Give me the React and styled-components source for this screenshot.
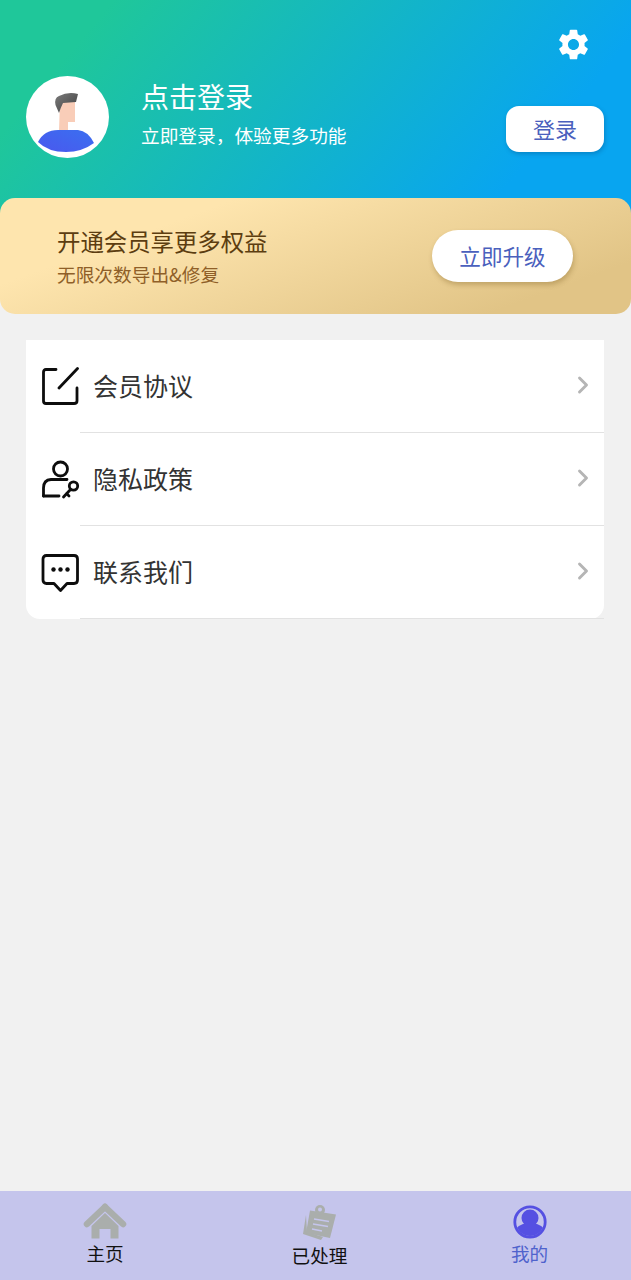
import React from "react";
import styled, { createGlobalStyle } from "styled-components";
import { ChevronRight } from "lucide-react";
import { MdSettings } from "react-icons/md";

const Global = createGlobalStyle`
  html, body { margin: 0; padding: 0; background: #f1f1f1; }
  body { font-family: "Noto Sans CJK SC", "Noto Sans", sans-serif; }
  * { box-sizing: border-box; }
`;

const Page = styled.div`
  width: 631px;
  height: 1280px;
  display: flex;
  flex-direction: column;
  background: #f1f1f1;
  overflow: hidden;
`;

const Header = styled.header`
  height: 213px;
  padding: 27px 27px 0 26px;
  display: flex;
  flex-direction: column;
  background: linear-gradient(130deg, #1fc79a 14%, #08a5f0 82%);
`;

const TopBar = styled.div`
  display: flex;
  justify-content: flex-end;
  align-items: center;
  padding-right: 12px;
  height: 35px;
  color: #fff;
  font-size: 37px;
  line-height: 0;
`;

const Profile = styled.div`
  margin-top: 14px;
  display: flex;
  align-items: flex-start;
`;

const Avatar = styled.div`
  width: 83px;
  height: 82px;
  border-radius: 50%;
  background: #fff;
  overflow: hidden;
  flex: none;
`;

const ProfileText = styled.div`
  margin-left: 32px;
  flex: 1;
  color: #fff;
  display: flex;
  flex-direction: column;
`;

const Name = styled.div`
  font-size: 28px;
  line-height: 41px;
`;

const Hint = styled.div`
  font-size: 18.7px;
  line-height: 28px;
  margin-top: 4px;
`;

const LoginButton = styled.button`
  margin-top: 30px;
  width: 98px;
  height: 46px;
  border: 0;
  padding: 0 0 3px;
  border-radius: 13px;
  background: #fff;
  color: #4a60bd;
  font: inherit;
  font-size: 22px;
  box-shadow: 1px 2px 4px rgba(0, 60, 110, 0.3);
`;

const Banner = styled.section`
  height: 116px;
  margin-top: -15px;
  border-radius: 15px;
  padding: 0 58px 0 57px;
  display: flex;
  align-items: center;
  justify-content: space-between;
  background: linear-gradient(160deg, #fee5ae 25%, #e1c486 85%);
`;

const BannerText = styled.div`
  display: flex;
  flex-direction: column;
`;

const BannerTitle = styled.div`
  font-size: 23.4px;
  line-height: 33px;
  color: #5c3d10;
`;

const BannerSub = styled.div`
  font-size: 18.7px;
  line-height: 28px;
  margin-top: 2px;
  color: #8f5f28;
`;

const UpgradeButton = styled.button`
  width: 141px;
  height: 52px;
  border: 0;
  padding: 0 0 2px;
  border-radius: 26px;
  background: #fff;
  color: #4a60bd;
  font: inherit;
  font-size: 21.6px;
  box-shadow: 1px 3px 5px rgba(110, 80, 20, 0.3);
`;

const Menu = styled.nav`
  margin: 26px 27px 0 26px;
  border-radius: 0 0 14px 14px;
  background: #fff;
  display: flex;
  flex-direction: column;
`;

const Row = styled.div`
  height: 93px;
  display: flex;
  align-items: stretch;
`;

const RowIcon = styled.div`
  width: 54px;
  flex: none;
  display: flex;
  align-items: center;
  padding-left: 15px;
`;

const RowBody = styled.div`
  flex: 1;
  display: flex;
  align-items: center;
  justify-content: space-between;
  padding-right: 7px;
  border-bottom: 1px solid #e2e2e2;
`;

const RowLabel = styled.span`
  font-size: 25px;
  color: #333;
  margin: -2px 0 0 13px;
`;

const Chevron = styled(ChevronRight)`
  color: #b5b5b5;
  margin-top: -2px;
`;

const Spacer = styled.div`
  flex: 1;
`;

const TabBar = styled.footer`
  height: 89px;
  display: grid;
  grid-template-columns: 210px 219px 201px;
  background: #c5c5ec;
`;

const Tab = styled.div`
  display: flex;
  flex-direction: column;
  align-items: center;
  padding-top: ${(p) => p.$top}px;
`;

const TabLabel = styled.span`
  font-size: 18.6px;
  line-height: 26px;
  margin-top: ${(p) => p.$gap}px;
  color: ${(p) => (p.$active ? "#4f62cc" : "#111")};
`;

const AvatarArt = () => (
  <svg width="83" height="82" viewBox="0 0 83 82">
    <defs>
      <linearGradient id="shirt" x1="0" y1="1" x2="1" y2="0">
        <stop offset="0" stopColor="#4a58ee" />
        <stop offset="1" stopColor="#3a6ff0" />
      </linearGradient>
      <linearGradient id="hair" x1="0" y1="0" x2="1" y2="1">
        <stop offset="0" stopColor="#7b7b7b" />
        <stop offset="1" stopColor="#3f3f3f" />
      </linearGradient>
    </defs>
    <path d="M34 24H49V46H42V55H33Z" fill="#f9cdb8" />
    <path d="M33 37L29.500 29Q28 22 33 20Q42 15.500 52 18L50 26L37 27Q35 31 33 37Z" fill="url(#hair)" />
    <path d="M12 66Q18 54 32 54H52Q62 55 68 67Q56 76 40 76Q22 76 12 66Z" fill="url(#shirt)" />
  </svg>
);

const EditIcon = () => (
  <svg width="39" height="39" viewBox="0 0 39 39" fill="none" stroke="#0d0d0d" strokeWidth="2.800" strokeLinecap="round">
    <path d="M15 2.500H5Q2.500 2.500 2.500 5V34Q2.500 36.500 5 36.500H33Q36 36.500 36 34V21" />
    <path d="M36.500 1.500L18 21" />
  </svg>
);

const PersonKeyIcon = () => (
  <svg width="39" height="39" viewBox="0 0 39 39" fill="none" stroke="#0d0d0d" strokeWidth="2.800" strokeLinecap="round">
    <circle cx="19.500" cy="9" r="7" />
    <path d="M2.500 36V28Q2.500 20 10 19.500H26" />
    <path d="M2.500 36H18" />
    <circle cx="32.500" cy="26" r="4.200" />
    <path d="M29.500 29.500L22.500 37M25.500 33.500L28 36" />
  </svg>
);

const ChatIcon = () => (
  <svg width="39" height="39" viewBox="0 0 39 39" fill="none" stroke="#0d0d0d" strokeWidth="2.800" strokeLinejoin="round">
    <path d="M5.500 2.500H33Q36.500 2.500 36.500 6V27Q36.500 30.500 33 30.500H26L19.500 37.500L13 30.500H5.500Q2 30.500 2 27V6Q2 2.500 5.500 2.500Z" />
    <circle cx="12.500" cy="16.500" r="2.200" fill="#0d0d0d" stroke="none" />
    <circle cx="19.500" cy="16.500" r="2.200" fill="#0d0d0d" stroke="none" />
    <circle cx="26.500" cy="16.500" r="2.200" fill="#0d0d0d" stroke="none" />
  </svg>
);

const HomeIcon = () => (
  <svg width="44" height="36" viewBox="0 0 44 36">
    <path d="M22 4L4 21" stroke="#aaaeac" strokeWidth="6.500" strokeLinecap="round" fill="none" />
    <path d="M22 4L40 21" stroke="#aaaeac" strokeWidth="6.500" strokeLinecap="round" fill="none" />
    <path d="M22 10L8.500 23V35.500H16.500V26H27.500V35.500H35.500V23Z" fill="#aaaeac" />
  </svg>
);

const NoteIcon = () => (
  <svg width="36" height="38" viewBox="0 0 36 38">
    <path d="M4 11L1 30L19 36L21 33L5 28Z" fill="#aaaeac" />
    <path d="M8 6.500L34 10.500L28 34L4 29Z" fill="#aaaeac" />
    <circle cx="18" cy="6" r="5" fill="#aaaeac" />
    <circle cx="18" cy="5.500" r="2" fill="#c5c5ec" />
    <path d="M12 15L27 17.500M11 20L26 22.500M10 25L20 27" stroke="#c5c5ec" strokeWidth="1.400" />
  </svg>
);

const UserIcon = () => (
  <svg width="34" height="34" viewBox="0 0 34 34">
    <defs>
      <clipPath id="ring">
        <circle cx="17" cy="17" r="14" />
      </clipPath>
    </defs>
    <circle cx="17" cy="17" r="15.200" fill="none" stroke="#5550e2" strokeWidth="2.800" />
    <circle cx="17" cy="13" r="8.500" fill="#5550e2" />
    <path d="M2 34V25Q4 21 10 19L24 19Q30 21 32 25V34Z" fill="#5550e2" clipPath="url(#ring)" />
  </svg>
);

const rows = [
  { label: "会员协议", Icon: EditIcon },
  { label: "隐私政策", Icon: PersonKeyIcon },
  { label: "联系我们", Icon: ChatIcon },
];

export default function App() {
  return (
    <Page>
      <Global />
      <Header>
        <TopBar>
          <MdSettings />
        </TopBar>
        <Profile>
          <Avatar>
            <AvatarArt />
          </Avatar>
          <ProfileText>
            <Name>点击登录</Name>
            <Hint>立即登录，体验更多功能</Hint>
          </ProfileText>
          <LoginButton>登录</LoginButton>
        </Profile>
      </Header>
      <Banner>
        <BannerText>
          <BannerTitle>开通会员享更多权益</BannerTitle>
          <BannerSub>无限次数导出&amp;修复</BannerSub>
        </BannerText>
        <UpgradeButton>立即升级</UpgradeButton>
      </Banner>
      <Menu>
        {rows.map(({ label, Icon }) => (
          <Row key={label}>
            <RowIcon>
              <Icon />
            </RowIcon>
            <RowBody>
              <RowLabel>{label}</RowLabel>
              <Chevron size={28} strokeWidth={2.500} />
            </RowBody>
          </Row>
        ))}
      </Menu>
      <Spacer />
      <TabBar>
        <Tab $top={12}>
          <HomeIcon />
          <TabLabel $gap={1}>主页</TabLabel>
        </Tab>
        <Tab $top={13}>
          <NoteIcon />
          <TabLabel $gap={0}>已处理</TabLabel>
        </Tab>
        <Tab $top={14}>
          <UserIcon />
          <TabLabel $gap={1} $active>我的</TabLabel>
        </Tab>
      </TabBar>
    </Page>
  );
}
